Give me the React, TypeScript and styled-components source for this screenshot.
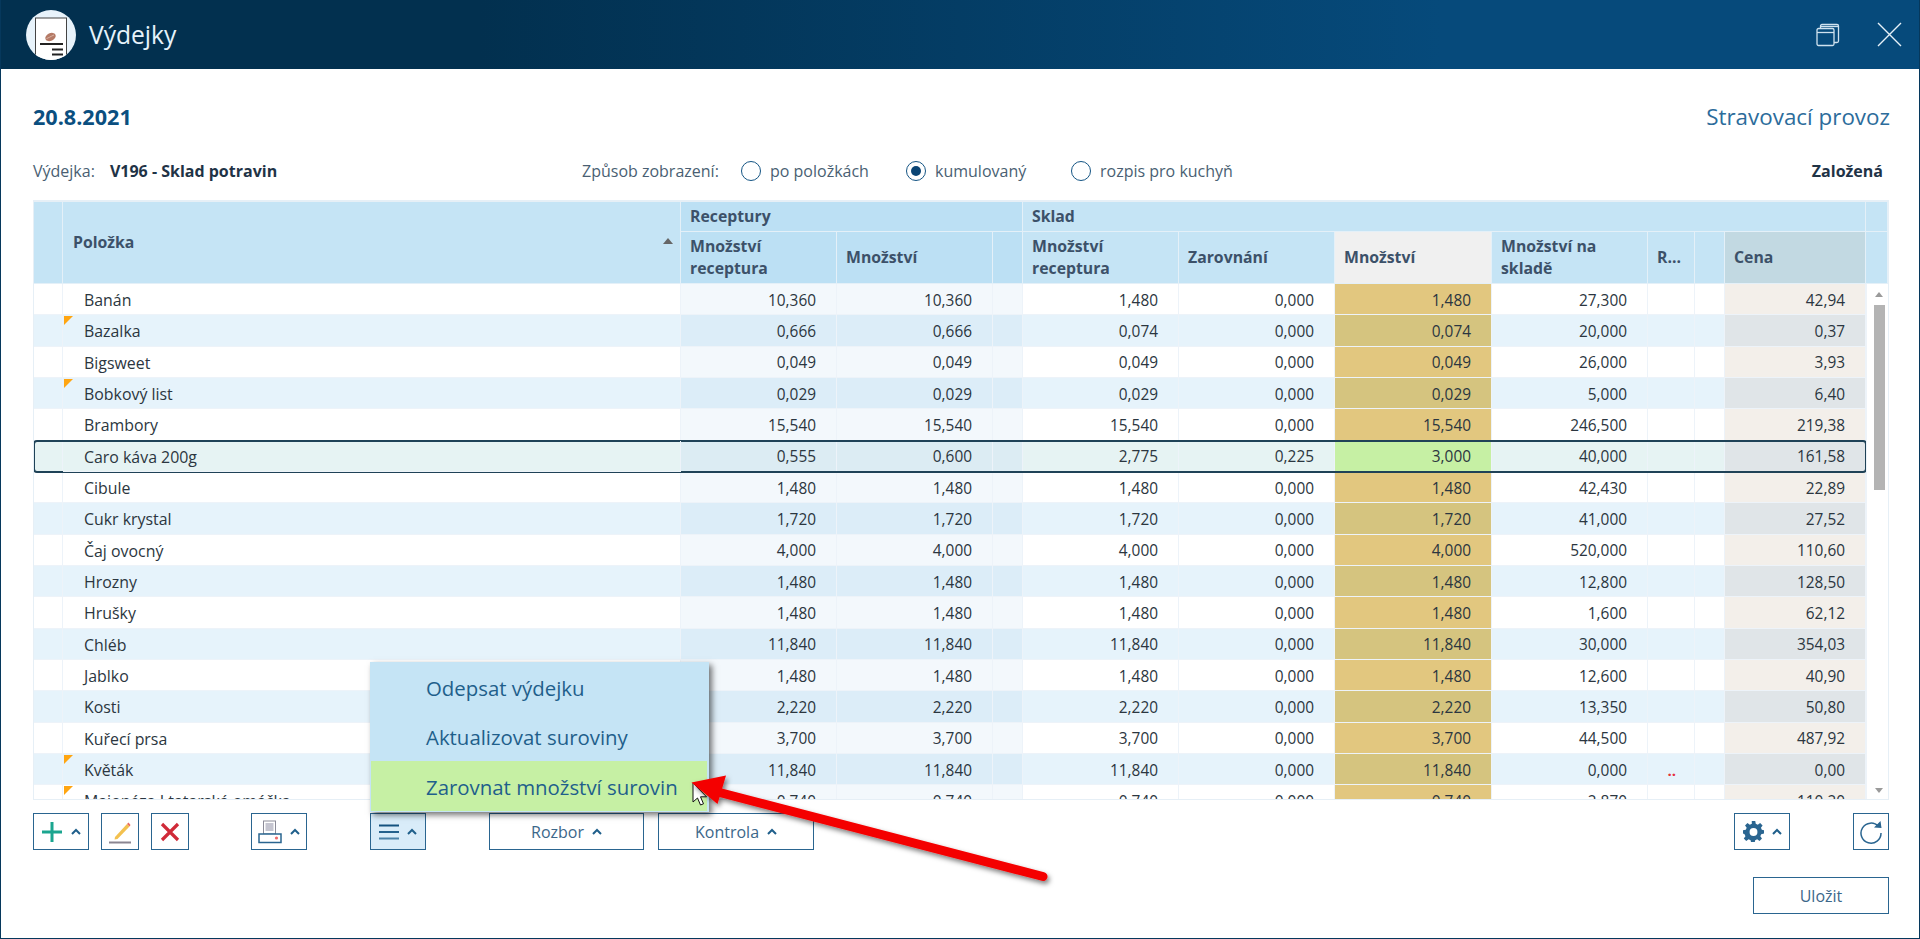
import React from "react";
import styled, { createGlobalStyle } from "styled-components";

const Global = createGlobalStyle`
  html, body { margin: 0; padding: 0; background: #fff; }
  body { font-family: "Open Sans", "Noto Sans", sans-serif; }
  * { box-sizing: border-box; }
`;

const COLS = "29px 618px 156px 156px 30px 156px 156px 157px 156px 47px 30px 141px";

const Window = styled.div`
  position: relative;
  width: 1920px;
  height: 939px;
  overflow: hidden;
  border: 1px solid #06385c;
  border-top: 0;
  display: flex;
  flex-direction: column;
  background: #fff;
`;
const TitleBar = styled.header`
  height: 69px;
  flex: none;
  margin: 0 -1px;
  padding: 0 18px 0 26px;
  display: flex;
  align-items: center;
  background: linear-gradient(90deg, #02304f 0%, #02304f 25%, #064a7b 75%, #064a7b 100%);
`;
const Logo = styled.svg`
  width: 50px;
  height: 50px;
  flex: none;
`;
const AppTitle = styled.h1`
  margin: 0 0 0 13px;
  font-size: 24.6px;
  font-weight: 400;
  color: #e6f3fb;
  flex: 1;
`;
const WinIcon = styled.svg`
  display: block;
  flex: none;
  margin-left: ${(p: { $ml: number }) => p.$ml}px;
`;
const Content = styled.main`
  flex: 1;
  padding: 0 29px 0 32px;
  display: flex;
  flex-direction: column;
`;
const DateRow = styled.div`
  height: 48px;
  margin-top: 24px;
  display: flex;
  justify-content: space-between;
  align-items: center;
  line-height: 48px;
`;
const DateText = styled.div`
  font-size: 21.6px;
  font-weight: 700;
  color: #0b4f80;
`;
const Place = styled.div`
  font-size: 22.4px;
  color: #2c6c9b;
`;
const InfoRow = styled.div`
  height: 59px;
  padding-top: 1px;
  display: flex;
  align-items: center;
  font-size: 16px;
  color: #4a5f73;
`;
const IssueLabel = styled.div`
  width: 549px;
  display: flex;
  gap: 15px;
`;
const Strong = styled.strong`
  color: #1f3346;
  font-weight: 700;
`;
const ViewLabel = styled.span`
  margin-right: 21px;
  width: 138px;
  white-space: nowrap;
`;
const Radio = styled.label`
  display: flex;
  align-items: center;
  gap: 9px;
  white-space: nowrap;
  width: ${(p: { $w: number }) => p.$w}px;
`;
const RadioDot = styled.span<{ $on?: boolean }>`
  width: 20px;
  height: 20px;
  border-radius: 50%;
  border: 1.5px solid #155584;
  flex: none;
  display: flex;
  align-items: center;
  justify-content: center;
  &::after {
    content: "";
    width: 10px;
    height: 10px;
    border-radius: 50%;
    background: ${(p) => (p.$on ? "#0a4474" : "transparent")};
  }
`;
const Status = styled(Strong)`
  margin-left: auto;
  margin-right: 7px;
`;
const Main = styled.div`
  position: relative;
  width: 1856px;
`;
const Table = styled.section`
  width: 1856px;
  height: 600px;
  border: 1px solid #e6eff6;
  border-top: 2px solid #e6eff6;
  display: flex;
  flex-direction: column;
  overflow: hidden;
`;
const Head = styled.div`
  height: 82px;
  flex: none;
  display: grid;
  grid-template-columns: ${COLS} 1fr;
  grid-template-rows: 30px 52px;
  font-size: 15.8px;
  font-weight: 700;
  color: #3c5169;
  line-height: 22px;
`;
const HeadCell = styled.div<{ $bg?: string; $col?: string; $row?: string; $pad?: number }>`
  background: ${(p) => p.$bg ?? "#c5e4f5"};
  grid-column: ${(p) => p.$col ?? "auto"};
  grid-row: ${(p) => p.$row ?? "auto"};
  padding: 0 ${(p) => p.$pad ?? 9}px 2px;
  border-right: 1px solid #e4f0f8;
  border-bottom: 1px solid #e4f0f8;
  display: flex;
  align-items: center;
  position: relative;
`;
const HeadText = styled.span`
  display: block;
  white-space: nowrap;
`;
const SortMark = styled.span`
  position: absolute;
  right: 7px;
  top: 36px;
  width: 0;
  height: 0;
  border-left: 5px solid transparent;
  border-right: 5px solid transparent;
  border-bottom: 6px solid #666;
`;
const Body = styled.div`
  flex: 1;
  display: flex;
  min-height: 0;
`;
const Rows = styled.div`
  width: 1832px;
  height: 516px;
  overflow: hidden;
  flex: none;
`;
const Row = styled.div<{ $odd: boolean; $sel: boolean }>`
  height: 31.33px;
  display: grid;
  grid-template-columns: ${COLS};
  align-items: stretch;
  font-size: 15.4px;
  color: #2b3640;
  background: ${(p) => (p.$sel ? "#e6f3f3" : p.$odd ? "#e6f3fb" : "#fff")};
  position: relative;
  ${(p) => (p.$sel ? "outline: 2.5px solid #1f4257; outline-offset: -1.5px; border-radius: 3px; z-index: 1;" : "")}
`;
const kindBg = (kind: string, odd: boolean, sel: boolean) => {
  if (kind === "rec") return sel ? "#dcecf3" : odd ? "#dcedf8" : "#f3f8fc";
  if (kind === "qty") return sel ? "#c6f0a4" : odd ? "#d5c47f" : "#e2c77f";
  if (kind === "price") return sel || odd ? "#e0e5e8" : "#f3efea";
  return "transparent";
};
const Cell = styled.div<{ $kind: string; $odd: boolean; $sel: boolean }>`
  background: ${(p) => kindBg(p.$kind, p.$odd, p.$sel)};
  border-right: 1px solid #edf3f9;
  border-bottom: 1px solid #edf3f9;
  display: flex;
  align-items: center;
  justify-content: flex-end;
  padding: 2px 20px 0 0;
  white-space: nowrap;
  overflow: hidden;
`;
const NameCell = styled(Cell)`
  justify-content: flex-start;
  padding: 2px 0 0 21px;
  font-size: 15.9px;
  position: relative;
`;
const Flag = styled.span`
  position: absolute;
  left: 1px;
  top: 1px;
  width: 0;
  height: 0;
  border-top: 9px solid #ffa511;
  border-right: 9px solid transparent;
`;
const Warn = styled.span`
  color: #e5303a;
  font-weight: 700;
  font-size: 15px;
  margin-right: -2px;
`;
const ScrollCol = styled.div`
  flex: 1;
  position: relative;
  display: flex;
  flex-direction: column;
  align-items: center;
  padding: 8px 0 6px 3px;
  border-left: 1px solid #edf3f9;
`;
const ArrowUp = styled.span`
  width: 0;
  height: 0;
  border-left: 4px solid transparent;
  border-right: 4px solid transparent;
  border-bottom: 5px solid #9a9a9a;
`;
const ArrowDown = styled.span`
  margin-top: auto;
  width: 0;
  height: 0;
  border-left: 4px solid transparent;
  border-right: 4px solid transparent;
  border-top: 5px solid #9a9a9a;
`;
const Thumb = styled.div`
  width: 11px;
  height: 185px;
  margin-top: 8px;
  background: #b4b4b4;
`;
const Toolbar = styled.div`
  height: 37px;
  margin-top: 13px;
  display: flex;
`;
const ToolButton = styled.button<{ $w: number; $ml?: number; $active?: boolean; $auto?: boolean }>`
  width: ${(p) => p.$w}px;
  height: 37px;
  margin-left: ${(p) => (p.$auto ? "auto" : `${p.$ml ?? 0}px`)};
  flex: none;
  padding: 0;
  border: 1.5px solid #2a6590;
  background: ${(p) => (p.$active ? "#d9ecf9" : "#fff")};
  color: #3c678a;
  font: 400 16px "Open Sans", "Noto Sans", sans-serif;
  display: flex;
  align-items: center;
  justify-content: center;
  gap: 8px;
`;
const Caret = styled.svg`
  width: 10px;
  height: 7px;
  flex: none;
`;
const SaveRow = styled.div`
  margin-top: 27px;
  display: flex;
  justify-content: flex-end;
  width: 1856px;
`;
const Menu = styled.nav`
  position: absolute;
  left: 337px;
  top: 462px;
  width: 339px;
  height: 150px;
  padding: 0 2px 1px 1px;
  background: #c5e4f5;
  box-shadow: 3px 3px 6px rgba(0, 0, 0, 0.55);
  display: flex;
  flex-direction: column;
  z-index: 5;
`;
const MenuItem = styled.div<{ $hot?: boolean }>`
  height: 49.5px;
  padding: 2px 0 0 55px;
  display: flex;
  align-items: center;
  font-size: 20.4px;
  color: #1f5f8b;
  white-space: nowrap;
  background: ${(p) => (p.$hot ? "#c6f0a4" : "transparent")};
`;
const Overlay = styled.svg`
  position: absolute;
  left: -1px;
  top: 0;
  width: 1920px;
  height: 939px;
  pointer-events: none;
  z-index: 10;
`;

type R = { n: string; a: string; b: string; c: string; d: string; q: string; s: string; p: string; f?: boolean; w?: boolean };
const same = (n: string, v: string, s: string, p: string, f?: boolean, w?: boolean): R => ({
  n, a: v, b: v, c: v, d: "0,000", q: v, s, p, f, w,
});
const DATA: R[] = [
  { n: "Banán", a: "10,360", b: "10,360", c: "1,480", d: "0,000", q: "1,480", s: "27,300", p: "42,94" },
  { n: "Bazalka", a: "0,666", b: "0,666", c: "0,074", d: "0,000", q: "0,074", s: "20,000", p: "0,37", f: true },
  same("Bigsweet", "0,049", "26,000", "3,93"),
  same("Bobkový list", "0,029", "5,000", "6,40", true),
  same("Brambory", "15,540", "246,500", "219,38"),
  { n: "Caro káva 200g", a: "0,555", b: "0,600", c: "2,775", d: "0,225", q: "3,000", s: "40,000", p: "161,58" },
  same("Cibule", "1,480", "42,430", "22,89"),
  same("Cukr krystal", "1,720", "41,000", "27,52"),
  same("Čaj ovocný", "4,000", "520,000", "110,60"),
  same("Hrozny", "1,480", "12,800", "128,50"),
  same("Hrušky", "1,480", "1,600", "62,12"),
  same("Chléb", "11,840", "30,000", "354,03"),
  same("Jablko", "1,480", "12,600", "40,90"),
  same("Kosti", "2,220", "13,350", "50,80"),
  same("Kuřecí prsa", "3,700", "44,500", "487,92"),
  same("Květák", "11,840", "0,000", "0,00", true, true),
  same("Majonéza I tatarská omáčka", "0,740", "2,870", "110,20", true),
];

const CaretIcon = () => (
  <Caret viewBox="0 0 10 7">
    <path d="M1 6 5 2l4 4" fill="none" stroke="#1f5f8b" strokeWidth="2" />
  </Caret>
);

const TwoLines = ({ a, b }: { a: string; b: string }) => (
  <div>
    <HeadText>{a}</HeadText>
    <HeadText>{b}</HeadText>
  </div>
);

export default function App() {
  return (
    <>
      <Global />
      <Window>
        <TitleBar>
          <Logo viewBox="0 0 50 50">
            <defs>
              <clipPath id="lc">
                <circle cx="25" cy="25" r="25" />
              </clipPath>
            </defs>
            <circle cx="25" cy="25" r="25" fill="#e8f3fb" />
            <g clipPath="url(#lc)">
              <rect x="9.5" y="8" width="31" height="44" fill="#fff" stroke="#444" strokeWidth="1" />
              <ellipse cx="24.5" cy="27" rx="5.5" ry="3.8" fill="#b57a66" transform="rotate(-25 24.5 27)" />
              <path d="M20.500 28.500c2-.5 4-2 7.500-3.500" stroke="#e3c4b8" strokeWidth="0.8" fill="none" />
              <path d="M14 34h23" stroke="#222" strokeWidth="2" />
              <path d="M26 39.5h11M26 44.5h11" stroke="#222" strokeWidth="2" />
            </g>
          </Logo>
          <AppTitle>Výdejky</AppTitle>
          <WinIcon $ml={0} width="24" height="24" viewBox="0 0 24 24">
            <g fill="none" stroke="#cfe2ef" strokeWidth="1.3">
              <rect x="1" y="5.5" width="17" height="17" rx="1.5" />
              <path d="M1 9.5h17" />
              <path d="M4.5 5.5V3a1.5 1.5 0 0 1 1.5-1.5h15a1.5 1.5 0 0 1 1.5 1.5v15a1.5 1.5 0 0 1-1.5 1.5H18" />
              <path d="M4.5 3.5h18" />
            </g>
          </WinIcon>
          <WinIcon $ml={37} width="25" height="25" viewBox="0 0 25 25">
            <path d="M1 1l23 23M24 1 1 24" stroke="#e6f1f8" strokeWidth="1.4" fill="none" />
          </WinIcon>
        </TitleBar>
        <Content>
          <DateRow>
            <DateText>20.8.2021</DateText>
            <Place>Stravovací provoz</Place>
          </DateRow>
          <InfoRow>
            <IssueLabel>
              <span>Výdejka:</span>
              <Strong>V196 - Sklad potravin</Strong>
            </IssueLabel>
            <ViewLabel>Způsob zobrazení:</ViewLabel>
            <Radio $w={165}><RadioDot />po položkách</Radio>
            <Radio $w={165}><RadioDot $on />kumulovaný</Radio>
            <Radio $w={165}><RadioDot />rozpis pro kuchyň</Radio>
            <Status>Založená</Status>
          </InfoRow>
          <Main>
            <Table>
              <Head>
                <HeadCell $col="1" $row="1 / 3" />
                <HeadCell $col="2" $row="1 / 3" $pad={10}>
                  Položka
                  <SortMark />
                </HeadCell>
                <HeadCell $col="3 / 6" $bg="#bce0f4">Receptury</HeadCell>
                <HeadCell $col="6 / 13">Sklad</HeadCell>
                <HeadCell $col="13" />
                <HeadCell $bg="#bce0f4"><TwoLines a="Množství" b="receptura" /></HeadCell>
                <HeadCell $bg="#bce0f4">Množství</HeadCell>
                <HeadCell $bg="#bce0f4" />
                <HeadCell><TwoLines a="Množství" b="receptura" /></HeadCell>
                <HeadCell>Zarovnání</HeadCell>
                <HeadCell $bg="#f0f0f0">Množství</HeadCell>
                <HeadCell><TwoLines a="Množství na" b="skladě" /></HeadCell>
                <HeadCell>R...</HeadCell>
                <HeadCell />
                <HeadCell $bg="#c2d9e2">Cena</HeadCell>
                <HeadCell />
              </Head>
              <Body>
                <Rows>
                  {DATA.map((r, i) => {
                    const odd = i % 2 === 1;
                    const sel = i === 5;
                    const k = { $odd: odd, $sel: sel };
                    return (
                      <Row key={r.n} {...k}>
                        <Cell $kind="" {...k} />
                        <NameCell $kind="" {...k}>
                          {r.f && <Flag />}
                          {r.n}
                        </NameCell>
                        <Cell $kind="rec" {...k}>{r.a}</Cell>
                        <Cell $kind="rec" {...k}>{r.b}</Cell>
                        <Cell $kind="rec" {...k} />
                        <Cell $kind="" {...k}>{r.c}</Cell>
                        <Cell $kind="" {...k}>{r.d}</Cell>
                        <Cell $kind="qty" {...k}>{r.q}</Cell>
                        <Cell $kind="" {...k}>{r.s}</Cell>
                        <Cell $kind="" {...k}>{r.w && <Warn>..</Warn>}</Cell>
                        <Cell $kind="" {...k} />
                        <Cell $kind="price" {...k}>{r.p}</Cell>
                      </Row>
                    );
                  })}
                </Rows>
                <ScrollCol>
                  <ArrowUp />
                  <Thumb />
                  <ArrowDown />
                </ScrollCol>
              </Body>
            </Table>
            <Toolbar>
              <ToolButton $w={56}>
                <svg width="22" height="22" viewBox="0 0 22 22">
                  <path d="M11 1v20M1 11h20" stroke="#1ba58f" strokeWidth="3" fill="none" />
                </svg>
                <CaretIcon />
              </ToolButton>
              <ToolButton $w={38} $ml={12}>
                <svg width="24" height="24" viewBox="0 0 24 24">
                  <path d="M7 17 19 4l2.5 2.5L9.5 19l-3 .5z" fill="#f3c14f" />
                  <path d="M19 4l2.5 2.5 1-1.5L20.500 2.500z" fill="#ea6a5e" />
                  <path d="M1 22.500h22" stroke="#8a8591" strokeWidth="2" />
                </svg>
              </ToolButton>
              <ToolButton $w={38} $ml={12}>
                <svg width="20" height="20" viewBox="0 0 20 20">
                  <path d="M2 2l16 16M18 2 2 18" stroke="#d02a38" strokeWidth="3.2" fill="none" />
                </svg>
              </ToolButton>
              <ToolButton $w={56} $ml={62}>
                <svg width="24" height="24" viewBox="0 0 24 24">
                  <rect x="5.500" y="1" width="12" height="13" fill="#fff" stroke="#8b8b98" />
                  <rect x="7.500" y="3" width="8" height="8" fill="#c5c5d0" />
                  <rect x="1" y="14" width="22" height="8.500" fill="#fff" stroke="#2a6590" strokeWidth="1.500" />
                  <circle cx="18.500" cy="18" r="1.600" fill="#ef6a6a" />
                </svg>
                <CaretIcon />
              </ToolButton>
              <ToolButton $w={56} $ml={63} $active>
                <svg width="20" height="16" viewBox="0 0 20 16">
                  <path d="M0 1.500h20" stroke="#14527f" strokeWidth="2" />
                  <path d="M0 8h20" stroke="#24618d" strokeWidth="2" />
                  <path d="M0 14.500h20" stroke="#4b82a8" strokeWidth="2" />
                </svg>
                <CaretIcon />
              </ToolButton>
              <ToolButton $w={155} $ml={63}>Rozbor <CaretIcon /></ToolButton>
              <ToolButton $w={156} $ml={14}>Kontrola <CaretIcon /></ToolButton>
              <ToolButton $w={56} $auto>
                <svg width="21" height="21" viewBox="0 0 24 24">
                  <path
                    fill="#2a6590"
                    fillRule="evenodd"
                    d="M10 0h4l.6 3.200 2.300 1 2.700-1.900 2.800 2.800-1.900 2.700 1 2.300L24 10.700v3.700l-3.200.6-1 2.300 1.900 2.700-2.800 2.800-2.700-1.900-2.300 1-.6 3.100h-4l-.6-3.100-2.300-1-2.700 1.900-2.800-2.800 1.900-2.700-1-2.300L0 14.400v-3.700l3.200-.6 1-2.300-1.900-2.700 2.800-2.800 2.700 1.900 2.300-1zM12 8a4.500 4.500 0 1 0 0 9 4.500 4.500 0 0 0 0-9z"
                  />
                </svg>
                <CaretIcon />
              </ToolButton>
              <ToolButton $w={36} $ml={63}>
                <svg width="24" height="24" viewBox="0 0 24 24">
                  <path d="M19.500 6.500A10 10 0 1 0 22 13" fill="none" stroke="#2a6590" strokeWidth="1.500" />
                  <path d="M15 7.500 22.500 8 21.500 1z" fill="#2a6590" />
                </svg>
              </ToolButton>
            </Toolbar>
            <Menu>
              <MenuItem>Odepsat výdejku</MenuItem>
              <MenuItem>Aktualizovat suroviny</MenuItem>
              <MenuItem $hot>Zarovnat množství surovin</MenuItem>
            </Menu>
            <SaveRow>
              <ToolButton $w={136}>Uložit</ToolButton>
            </SaveRow>
          </Main>
        </Content>
        <Overlay viewBox="0 0 1920 939">
          <defs>
            <filter id="as" x="-10%" y="-30%" width="120%" height="160%">
              <feDropShadow dx="2" dy="3" stdDeviation="2.500" floodColor="#000" floodOpacity="0.5" />
            </filter>
          </defs>
          <path d="M693 783v19l4.500-4 3 7 3-1.200-3-7h6z" fill="#fff" stroke="#111" strokeWidth="1" />
          <g filter="url(#as)">
            <path d="M1043 876.500 714 791" stroke="#f40000" strokeWidth="9" strokeLinecap="round" fill="none" />
            <path d="M691.500 782.500 726 775.500 717.500 804z" fill="#f40000" />
          </g>
        </Overlay>
      </Window>
    </>
  );
}
